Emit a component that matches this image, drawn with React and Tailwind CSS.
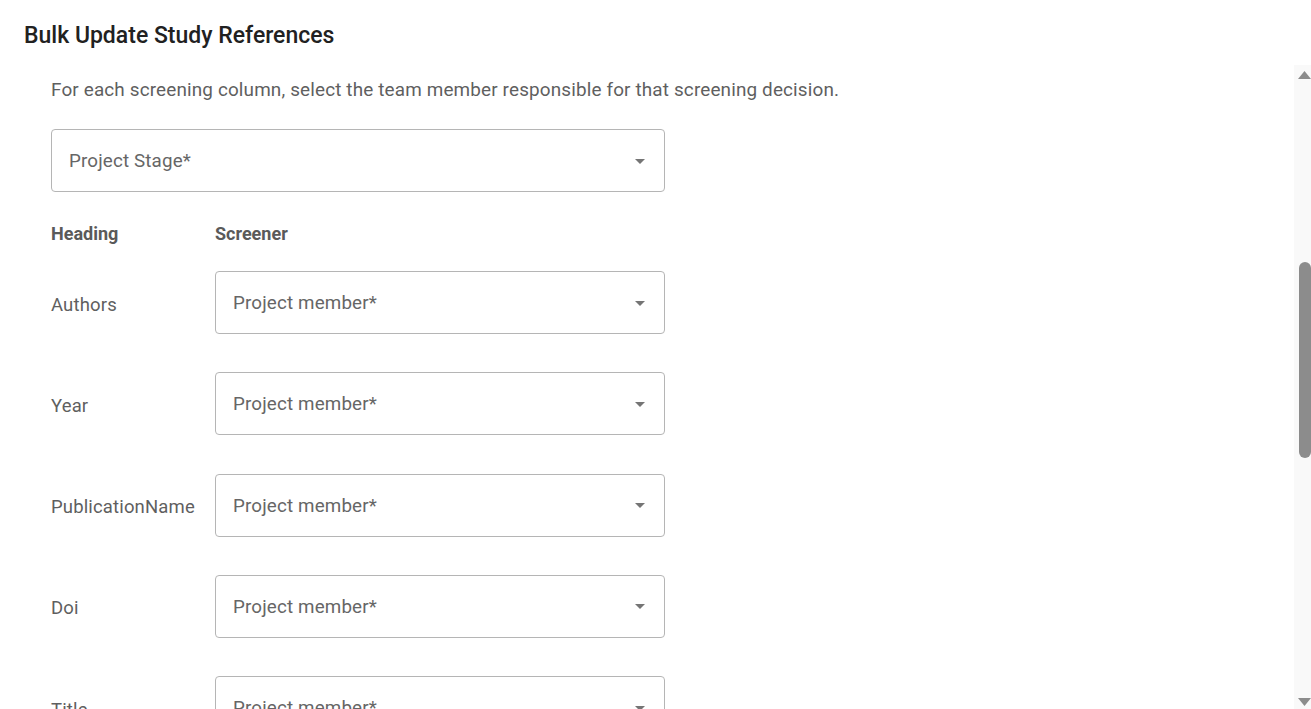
import React from "react";

const fields = [
  "Authors",
  "Year",
  "PublicationName",
  "Doi",
  "Title",
  "Abstract",
  "Keywords",
  "Url",
];

const ArrowDrop = () => (
  <svg width="24" height="24" viewBox="0 0 24 24" className="shrink-0 text-[#757575]">
    <path d="M7 10l5 5 5-5z" fill="currentColor" />
  </svg>
);

const SelectBox = ({ label, className }) => (
  <div
    className={
      "flex h-[63px] items-center justify-between rounded border border-[#b5b5b5] pl-[17px] pr-[12px] " +
      className
    }
  >
    <span className="pt-[1px] text-[18.8px] leading-[26px] tracking-[0.15px] text-[#666666]">
      {label}
    </span>
    <ArrowDrop />
  </div>
);

// drawn scrollbar (the browser hides native ones)
const Scrollbar = () => (
  <div className="flex w-[17px] shrink-0 flex-col bg-[#f9f9f9]">
    <svg width="13" height="8" viewBox="0 0 13 8" className="ml-[4px] mt-[6px] shrink-0">
      <path d="M6.5 0L13 8H0z" fill="#8c8c8c" />
    </svg>
    <div className="h-[183px] shrink-0" />
    <div className="ml-[5px] h-[196px] w-[12px] shrink-0 rounded-[6px] bg-[#8c8c8c]" />
    <div className="flex-1" />
    <svg width="13" height="8" viewBox="0 0 13 8" className="mb-[3px] ml-[4px] shrink-0">
      <path d="M0 0H13L6.5 8z" fill="#8c8c8c" />
    </svg>
  </div>
);

export default function App() {
  return (
    <div
      className="flex h-screen flex-col bg-white"
      style={{ fontFamily: "Roboto, 'Liberation Sans', sans-serif" }}
    >
      <h2 className="h-[65px] shrink-0 px-6 pt-[20px] text-[23px] font-medium leading-[32px] text-[#212121]">
        Bulk Update Study References
      </h2>
      <div className="flex min-h-0 flex-1">
        <div className="min-w-0 flex-1 overflow-hidden">
          <div className="pl-[51px] pt-[11px]">
            <p className="text-[18.9px] leading-[28px] tracking-[0.15px] text-[#5f5f5f]">
              For each screening column, select the team member responsible for that screening
              decision.
            </p>
            <SelectBox label="Project Stage*" className="mt-[25px] w-[614px]" />

            <div className="mt-[30px] flex text-[18px] font-bold leading-[24px] text-[#5a5a5a]">
              <div className="w-[164px]">Heading</div>
              <div>Screener</div>
            </div>

            <div className="mt-[25px] flex flex-col gap-[38.25px] pb-10">
              {fields.map((f) => (
                <div key={f} className="flex items-center">
                  <div className="w-[164px] pt-[4px] text-[18.5px] leading-[26px] tracking-[0.15px] text-[#5f5f5f]">
                    {f}
                  </div>
                  <SelectBox label="Project member*" className="w-[450px]" />
                </div>
              ))}
            </div>
          </div>
        </div>
        <Scrollbar />
      </div>
    </div>
  );
}
